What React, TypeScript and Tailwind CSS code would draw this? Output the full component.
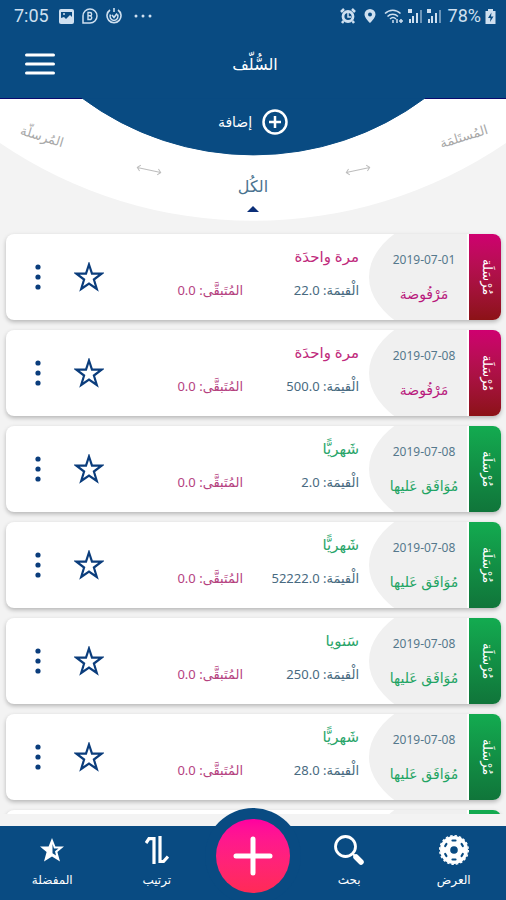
import { useState } from "react";
import clsx from "clsx";

type Advance = {
    id: number;
    date: string;
    rejected: boolean;
    period: string;
    amount: string;
};

const advances: Advance[] = [
    { id: 1, date: "2019-07-01", rejected: true, period: "مرة واحدَة", amount: "22.0" },
    { id: 2, date: "2019-07-08", rejected: true, period: "مرة واحدَة", amount: "500.0" },
    { id: 3, date: "2019-07-08", rejected: false, period: "شَهريًّا", amount: "2.0" },
    { id: 4, date: "2019-07-08", rejected: false, period: "شَهريًّا", amount: "52222.0" },
    { id: 5, date: "2019-07-08", rejected: false, period: "سَنويا", amount: "250.0" },
    { id: 6, date: "2019-07-08", rejected: false, period: "شَهريًّا", amount: "28.0" },
    { id: 7, date: "2019-07-08", rejected: false, period: "شَهريًّا", amount: "30.0" },
];

function SignalBars() {
    return (
        <svg width="15" height="16" viewBox="0 0 15 16" fill="currentColor" aria-hidden="true">
            <path d="M0 1h4v4H0zM1 11h2v4H1zM4 8h2v7H4z" />
            <path d="M8 5h2v10H8z" />
            <path d="M12 2h2v13h-2z" opacity="0.5" />
        </svg>
    );
}

function StatusBar() {
    return (
        <div
            dir="ltr"
            className="flex h-8 items-center justify-between pl-3.5 pr-2.5 font-['Roboto',sans-serif] text-lg text-[#cfe0f0]"
        >
            <div className="flex items-center gap-2">
                <span className="mr-0.5">7:05</span>
                <svg width="15" height="15" viewBox="0 0 15 15" aria-hidden="true">
                    <rect width="15" height="15" rx="2" fill="currentColor" />
                    <path d="M2 3h11v5l-2-2-4 4-2-2-3 1z" fill="#094b82" />
                    <circle cx="5" cy="5" r="1" fill="currentColor" />
                </svg>
                <svg width="16" height="16" viewBox="0 0 16 16" fill="none" stroke="currentColor" aria-hidden="true">
                    <path d="M1 15V8a7 7 0 1 1 7 7z" strokeWidth="1.5" />
                    <path d="M6 4.5v7h2.5a2 2 0 0 0 0-3.7H6h2a1.6 1.6 0 0 0 0-3.3z" strokeWidth="1.4" />
                </svg>
                <svg width="16" height="16" viewBox="0 0 16 16" fill="none" stroke="currentColor" aria-hidden="true">
                    <path d="M4 2a7 7 0 1 0 8 0M8 0v4" strokeWidth="1.6" />
                    <path d="M4.500 6.500a4 4 0 1 0 7 0M6 7l2 2.500 3-4" strokeWidth="1.6" />
                </svg>
                <svg className="ml-1" width="20" height="4" viewBox="0 0 20 4" fill="currentColor" aria-hidden="true">
                    <circle cx="2" cy="2" r="1.500" />
                    <circle cx="9" cy="2" r="1.500" />
                    <circle cx="16" cy="2" r="1.500" />
                </svg>
            </div>
            <div className="flex items-center gap-1">
                <svg width="16" height="16" viewBox="0 0 16 16" aria-hidden="true">
                    <circle cx="8" cy="8.500" r="5" fill="#094b82" stroke="currentColor" strokeWidth="2.800" />
                    <path d="M1 4l3-3M15 4l-3-3M3.500 13L2 15M12.500 13l1.500 2" stroke="currentColor" strokeWidth="2.500" />
                    <path d="M8 5v4h3" fill="none" stroke="currentColor" strokeWidth="1.500" />
                </svg>
                <svg className="mx-1" width="12" height="16" viewBox="0 0 12 16" aria-hidden="true">
                    <path
                        d="M6 1a5.500 5.500 0 0 1 5.500 5.500C11.500 10 6 15 6 15S.5 10 .5 6.500A5.500 5.500 0 0 1 6 1z"
                        fill="currentColor"
                    />
                    <circle cx="6" cy="6.500" r="2" fill="#094b82" />
                </svg>
                <svg width="20" height="16" viewBox="0 0 20 16" fill="none" stroke="currentColor" aria-hidden="true">
                    <path d="M1 5.500c4.500-4.500 11-4.500 15.500 0M3.500 8.500c3-3 7.500-3 10.500 0M6 11c2-2 4-2 6 0" strokeWidth="1.500" />
                    <path d="M9 12v3M13 11v4M15 13h4M17 11v4" strokeWidth="1.500" />
                </svg>
                <SignalBars />
                <SignalBars />
                <span className="ml-0.5">78%</span>
                <svg width="11" height="15" viewBox="0 0 11 15" aria-hidden="true">
                    <path d="M3 0h5v2h2.500v13H.5V2H3z" fill="currentColor" />
                    <path d="M6.500 3.500L3 9h2.500l-.5 4L8.500 7.500H6z" fill="#094b82" />
                </svg>
            </div>
        </div>
    );
}

function TabArrow({ className }: { className: string }) {
    return (
        <svg
            className={className}
            width="26"
            height="8"
            viewBox="0 0 26 8"
            fill="none"
            stroke="#bdbdbd"
            aria-hidden="true"
        >
            <path d="M1 4h24M4 1L1 4l3 3M22 1l3 3-3 3" />
        </svg>
    );
}

function Header() {
    return (
        <header className="relative bg-[#094b82]">
            <StatusBar />
            <div className="grid h-[66px] grid-cols-3 items-center px-6 pb-0.5">
                <span />
                <h1 className="pl-1 text-center text-base text-white">السُّلّف</h1>
                <button type="button" aria-label="القائمة" className="justify-self-end text-white">
                    <svg width="32" height="24" viewBox="0 0 32 24" stroke="currentColor" strokeWidth="3" strokeLinecap="round">
                        <path d="M2.500 3h27M2.500 12h27M2.500 21h27" />
                    </svg>
                </button>
            </div>
            <div className="relative h-[124px] bg-[#f3f3f3]">
                <svg
                    className="absolute inset-0 h-full w-full"
                    viewBox="0 0 506 124"
                    preserveAspectRatio="none"
                    aria-hidden="true"
                >
                    <path d="M0 0H506V45A450 450 0 0 1 0 45z" fill="#fff" />
                    <path d="M0 0H506" stroke="#0a0a6e" strokeWidth="2" />
                    <path d="M82 0A287 287 0 0 0 425 0z" fill="#094b82" stroke="#094b82" />
                </svg>
                <div className="relative flex h-12 items-center justify-center">
                    <button type="button" className="flex items-center gap-2.5 text-sm font-medium text-white">
                        <svg width="26" height="26" viewBox="0 0 26 26" fill="none" stroke="currentColor">
                            <circle cx="13" cy="13" r="11.500" strokeWidth="2.500" />
                            <path d="M13 7v12M7 13h12" strokeWidth="2.500" />
                        </svg>
                        إضافة
                    </button>
                </div>
                <nav className="relative -mt-5 grid grid-cols-[84px_1fr_80px_1fr_84px] items-start justify-items-center text-[#a8a8a8]">
                    <a href="#received" className="-rotate-[17deg] text-[13px] leading-5">
                        المُستَلمَة
                    </a>
                    <TabArrow className="mt-10 -rotate-12" />
                    <a href="#all" className="mt-12 flex flex-col items-center gap-2 text-base text-[#4a7390]">
                        <span className="leading-6">الكُل</span>
                        <svg width="12" height="6" viewBox="0 0 12 6" fill="#0b2f78" aria-hidden="true">
                            <path d="M6 0l6 6H0z" />
                        </svg>
                    </a>
                    <TabArrow className="mt-10 rotate-12" />
                    <a href="#sent" className="rotate-[17deg] text-[13px] leading-5">
                        المُرسلّة
                    </a>
                </nav>
            </div>
        </header>
    );
}

function AdvanceCard({ item }: { item: Advance }) {
    const [starred, setStarred] = useState(false);

    return (
        <li className="flex h-[86px] shrink-0 overflow-hidden rounded-lg bg-white shadow-[0_2px_4px_rgba(0,0,0,0.25)]">
            <div
                className={clsx(
                    "flex w-8 items-center justify-center bg-linear-to-b pl-1 text-[13px] text-white [writing-mode:vertical-rl]",
                    item.rejected ? "from-[#cf0070] to-[#8c1216]" : "from-[#13ab50] to-[#10753a]",
                )}
            >
                مُرْسَلَة
            </div>
            <div className="mr-0.5 flex w-[98px] flex-col items-center justify-center gap-3.5 bg-[#f0f0f0] pr-1 pl-4 [clip-path:ellipse(120px_70px_at_120px_50%)]">
                <time className="text-xs leading-5 text-[#55788c]">{item.date}</time>
                <span
                    className={clsx(
                        "text-sm leading-5 font-medium whitespace-nowrap",
                        item.rejected ? "text-[#b8197c]" : "text-[#1fa463]",
                    )}
                >
                    {item.rejected ? "مَرْفُوضة" : "مُوَافَق عَليها"}
                </span>
            </div>
            <div className="grid flex-1 grid-cols-[116px_1fr] content-start gap-y-3.5 pt-3 pr-2.5 whitespace-nowrap">
                <h2
                    className={clsx(
                        "col-span-2 text-[15px] leading-5",
                        item.rejected ? "text-[#c02a7c]" : "text-[#2aa56a]",
                    )}
                >
                    {item.period}
                </h2>
                <p className="text-[13px] leading-5 text-[#486a80]">الْقيمَة: {item.amount}</p>
                <p className="text-[13px] leading-5 text-[#b5427f]">المُتَبقَّى: 0.0</p>
            </div>
            <div className="flex items-center gap-7 pl-6 text-[#0b3d7c]">
                <button type="button" aria-label="تفضيل" aria-pressed={starred} onClick={() => setStarred((s) => !s)}>
                    <svg
                        width="30"
                        height="30"
                        viewBox="0 0 30 30"
                        fill={starred ? "currentColor" : "none"}
                        stroke="currentColor"
                        strokeWidth="2.200"
                    >
                        <path d="M15 2.500l3 9.200h9.600l-7.700 5.800 2.900 9.500L15 21.500 7.200 27l2.900-9.500L2.400 11.700H12z" />
                    </svg>
                </button>
                <button type="button" aria-label="المزيد">
                    <svg width="16" height="28" viewBox="0 0 16 28" fill="currentColor">
                        <circle cx="8" cy="4" r="2.600" />
                        <circle cx="8" cy="14" r="2.600" />
                        <circle cx="8" cy="24" r="2.600" />
                    </svg>
                </button>
            </div>
        </li>
    );
}

function FilmIcon() {
    return (
        <svg width="30" height="30" viewBox="0 0 30 30" aria-hidden="true">
            <circle cx="15" cy="15" r="14" fill="#fff" />
            <circle cx="15" cy="15" r="14.300" fill="none" stroke="#fff" strokeWidth="1.400" strokeDasharray="2.500 2" />
            <circle cx="15" cy="15" r="3.800" fill="#094b82" />
            <g stroke="#094b82" strokeWidth="2.200" strokeLinecap="round">
                <path d="M13.500 5.500h3M13.500 24.500h3" />
                <path d="M6.200 11l1.200-2M22.600 9l1.200 2M6.200 19l1.200 2M22.600 21l1.200-2" />
            </g>
        </svg>
    );
}

function SearchIcon() {
    return (
        <svg width="30" height="30" viewBox="0 0 30 30" fill="none" stroke="#fff" aria-hidden="true">
            <circle cx="11.500" cy="11.500" r="10" strokeWidth="2.800" />
            <path d="M18.500 18.500l2.500 2.500" strokeWidth="2" />
            <path d="M22 22l5 5" strokeWidth="5.500" strokeLinecap="round" />
        </svg>
    );
}

function SortIcon() {
    return (
        <svg width="24" height="28" viewBox="0 0 24 28" fill="none" stroke="#fff" strokeWidth="3.200" aria-hidden="true">
            <path d="M1 7l3-4.400h5V28M15 0v25.500h3.500L23 20.500" />
        </svg>
    );
}

function HalfStarIcon() {
    return (
        <svg width="26" height="26" viewBox="0 0 26 26" aria-hidden="true">
            <path d="M13 1l3.400 8.500H25l-6.600 5.500 2.600 9.500-8-5-8 5L7.600 15 1 9.500h8.600z" fill="#fff" />
            <path d="M13.500 7l1.500 4.500h4.500L16 14.300l1 4.200-3.500-2.300z" fill="#094b82" />
        </svg>
    );
}

const navItems = [
    { label: "العرض", icon: <FilmIcon />, className: "" },
    { label: "بحث", icon: <SearchIcon />, className: "" },
    { label: "ترتيب", icon: <SortIcon />, className: "col-start-4" },
    { label: "المفضلة", icon: <HalfStarIcon />, className: "" },
];

function BottomBar() {
    return (
        <footer className="relative mt-3 h-[74px] shrink-0 bg-[#094b82]">
            <div className="absolute -top-[18px] left-1/2 h-24 w-24 -translate-x-1/2 rounded-full bg-[#094b82] p-[11px]">
                <button
                    type="button"
                    aria-label="إضافة سلفة"
                    className="flex h-full w-full items-center justify-center rounded-full bg-linear-to-b from-[#ff00a0] to-[#ff2a55]"
                >
                    <svg width="40" height="40" viewBox="0 0 40 40" stroke="#fff" strokeWidth="5" strokeLinecap="round">
                        <path d="M20 3v34M3 20h34" />
                    </svg>
                </button>
            </div>
            <nav className="grid h-full grid-cols-[1fr_1fr_88px_1fr_1fr]">
                {navItems.map((item) => (
                    <button
                        key={item.label}
                        type="button"
                        className={clsx("flex flex-col items-center pt-2 text-xs font-medium text-white", item.className)}
                    >
                        <span className="flex h-8 items-center">{item.icon}</span>
                        <span className="mt-1 leading-5">{item.label}</span>
                    </button>
                ))}
            </nav>
        </footer>
    );
}

export default function App() {
    return (
        <div
            dir="rtl"
            className="flex h-screen flex-col overflow-hidden bg-[#f3f3f3] font-['Noto_Sans','DejaVu_Sans',sans-serif]"
        >
            <Header />
            <main className="min-h-0 flex-1 overflow-y-auto [scrollbar-width:none]">
                <ul className="flex flex-col gap-2.5 pt-3 pr-[5px] pb-3 pl-1.5">
                    {advances.map((item) => (
                        <AdvanceCard key={item.id} item={item} />
                    ))}
                </ul>
            </main>
            <BottomBar />
        </div>
    );
}
